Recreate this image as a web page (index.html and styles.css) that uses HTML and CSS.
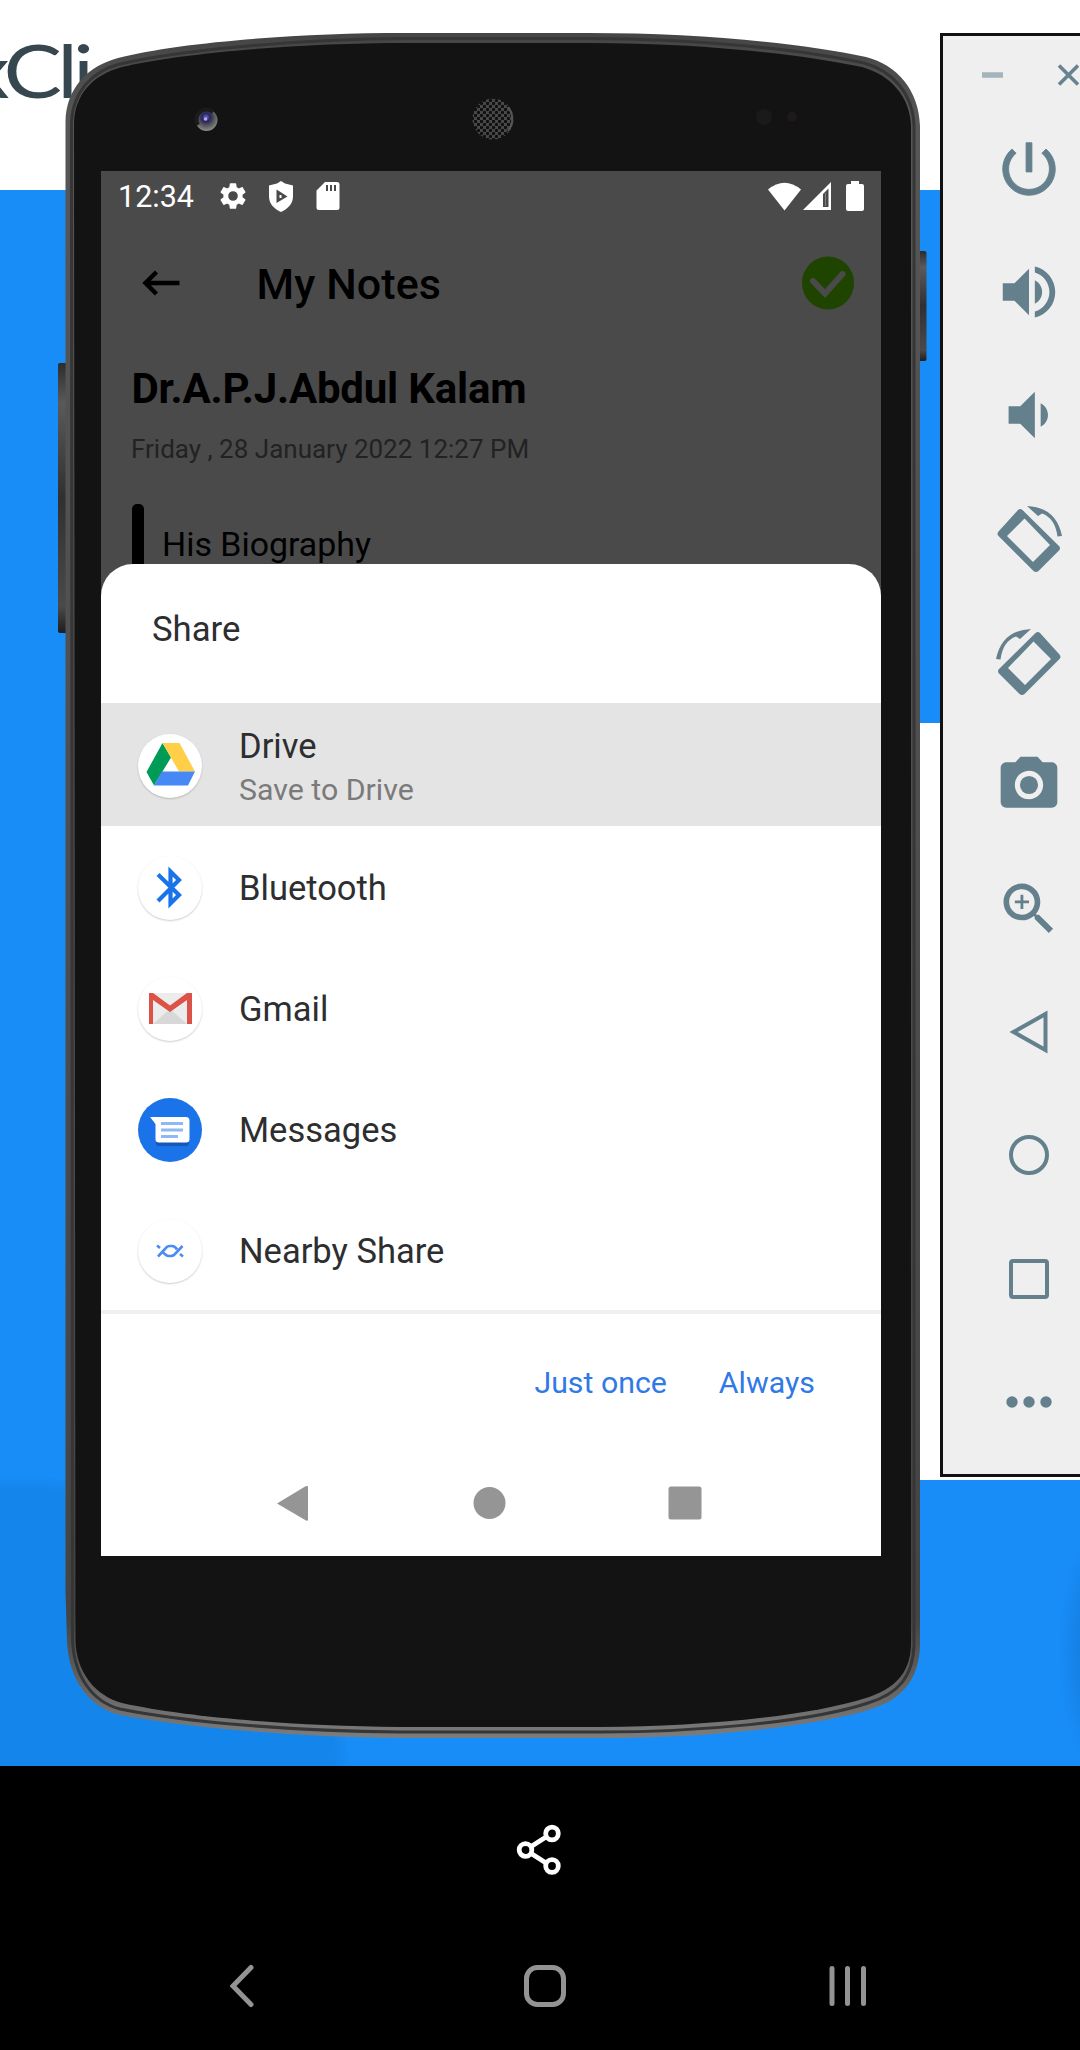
FILE: index.html
```html
<!DOCTYPE html>
<html lang="en">
<head>
<meta charset="utf-8">
<title>My Notes</title>
<link rel="stylesheet" href="styles.css">
</head>
<body>
<main class="stage">
  <div class="wordmark">xCli</div>

  <section class="phone">
    <svg class="phone-body" viewBox="58 33 870 1705" width="870" height="1705" aria-hidden="true">
      <defs>
        <linearGradient id="rim" x1="0" y1="0" x2="0" y2="1">
          <stop offset="0" stop-color="#454545"/>
          <stop offset=".05" stop-color="#565656"/>
          <stop offset=".93" stop-color="#444"/>
          <stop offset="1" stop-color="#7c7c7c"/>
        </linearGradient>
        <linearGradient id="key" x1="0" y1="0" x2="0" y2="1">
          <stop offset="0" stop-color="#2c2c2c"/>
          <stop offset=".15" stop-color="#5a5a5a"/>
          <stop offset=".5" stop-color="#303030"/>
          <stop offset=".9" stop-color="#4a4a4a"/>
          <stop offset="1" stop-color="#1d1d1d"/>
        </linearGradient>
        <radialGradient id="lens" cx=".48" cy=".38" r=".62">
          <stop offset="0" stop-color="#6d6cc4"/>
          <stop offset=".3" stop-color="#26245c"/>
          <stop offset=".6" stop-color="#55555a"/>
          <stop offset="1" stop-color="#8d8d8d"/>
        </radialGradient>
        <pattern id="mesh" width="6" height="6" patternUnits="userSpaceOnUse">
          <rect width="6" height="6" fill="#4a4a4a"/>
          <circle cx="1.5" cy="1.5" r="1.7" fill="#101010"/>
          <circle cx="4.5" cy="4.5" r="1.7" fill="#101010"/>
        </pattern>
      </defs>
      <rect x="58" y="363" width="12" height="270" rx="2" fill="url(#key)"/>
      <rect x="916" y="251" width="10.500" height="110" rx="2" fill="url(#key)"/>
      <path fill="url(#rim)" d="M65.500 122C66 88 88 66 118 58C180 42 300 33 404 33H589C700 33 800 43 866 57C897 65 919 90 920 126V1645C919 1680 902 1699 872 1709C810 1728 700 1738 600 1738H400C290 1737 185 1727 120 1715C90 1708 68 1680 67 1640L65.500 1592Z"/>
      <path fill="none" stroke="#363636" stroke-width="3" d="M71.500 122C73 92 92 71 120 64C180 50 300 39 404 38.500H589C700 39 800 49 864 63C893 71 913 94 914 126V1645C913 1677 898 1694 868 1703C810 1722 700 1732 600 1732H400C290 1731 185 1722 120 1709C93 1702 74 1677 72.500 1640Z"/>
      <path fill="#131313" d="M74 122C75 95 92 75 122 67C180 53 300 43 404 43H589C700 43 800 54 862 67C891 75 910 97 911 126V1645C910 1674 894 1689 866 1698C810 1716 700 1727 600 1727H400C290 1726 185 1717 122 1703C96 1696 76 1673 75.500 1640Z"/>
      <circle cx="206.500" cy="120" r="11" fill="url(#lens)"/>
      <path d="M198 125A10 10 0 0 1 200 112Q206 107 213 112" fill="none" stroke="#1b1b1b" stroke-width="4"/>
      <circle cx="205.500" cy="119" r="1.800" fill="#aaaaf0"/>
      <circle cx="493" cy="119" r="20.500" fill="url(#mesh)"/>
      <path d="M508 107A19 19 0 0 1 508 131" fill="none" stroke="#555" stroke-width="2"/>
      <circle cx="764" cy="117" r="8" fill="#1a1a1a"/>
      <circle cx="792" cy="117" r="5" fill="#1d1a19"/>
    </svg>

    <div class="screen">
      <div class="note">
        <div class="status">
          <span class="clock">12:34</span>
          <svg class="s-gear" width="32" height="32" viewBox="0 0 24 24" fill="#fff"><path d="M19.140 12.940c.04-.3.06-.61.06-.94 0-.32-.02-.64-.07-.94l2.030-1.580c.18-.14.23-.41.12-.61l-1.920-3.320c-.12-.22-.37-.29-.59-.22l-2.390.96c-.5-.38-1.030-.7-1.620-.94l-.36-2.540c-.04-.24-.24-.41-.48-.41h-3.840c-.24 0-.43.17-.47.41l-.36 2.540c-.59.24-1.130.57-1.620.94l-2.390-.96c-.22-.08-.47 0-.59.22L2.740 8.870c-.12.21-.08.47.12.61l2.030 1.580c-.05.3-.09.63-.09.94s.02.64.07.94l-2.030 1.580c-.18.14-.23.41-.12.61l1.920 3.320c.12.22.37.29.59.22l2.390-.96c.5.38 1.030.7 1.620.94l.36 2.540c.05.24.24.41.48.41h3.840c.24 0 .44-.17.47-.41l.36-2.540c.59-.24 1.130-.56 1.620-.94l2.390.96c.22.08.47 0 .59-.22l1.920-3.320c.12-.22.07-.47-.12-.61l-2.010-1.580zM12 15.600A3.600 3.600 0 1 1 12 8.400a3.600 3.600 0 0 1 0 7.200z"/></svg>
          <svg class="s-shield" width="26" height="31" viewBox="0 0 26 31"><path fill="#fff" d="M13 0l4 2.500 8 2v11c0 7-5 12.500-12 15.500C6 28 1 22.500 1 15.500v-11l8-2z"/><path fill="#4a4a4b" d="M8.500 8.500L19.500 15.500 8.500 22z"/><path fill="#fff" d="M11.500 14h2v3h-2z"/></svg>
          <svg class="s-sd" width="24" height="28" viewBox="0 0 24 28"><path fill="#fff" d="M9 0H21a2.500 2.500 0 0 1 2.500 2.500V25.500A2.500 2.500 0 0 1 21 28H3A2.500 2.500 0 0 1 .5 25.500V8.500z"/><path stroke="#4a4a4b" stroke-width="2" d="M11 3v6M15 3v6M19 3v6"/></svg>
          <span class="grow"></span>
          <svg width="33" height="29" viewBox="0 0 33 29"><path fill="#fff" d="M0 7.500Q16.500-6 33 7.500L16.500 28.500z"/></svg>
          <svg class="s-cell" width="28" height="28" viewBox="0 0 28 28"><path fill="#fff" d="M28 0V28H0z"/><path fill="#4a4a4b" d="M20 12l5.500-5.500V25H20z"/><path fill="#fff" d="M22 11h1v13h-1z" opacity=".3"/></svg>
          <svg class="s-batt" width="18" height="30" viewBox="0 0 18 30"><path fill="#fff" d="M5 0h8v3h3a2 2 0 0 1 2 2V28a2 2 0 0 1-2 2H2a2 2 0 0 1-2-2V5a2 2 0 0 1 2-2h3z"/></svg>
        </div>
        <div class="appbar">
          <svg width="38" height="26" viewBox="0 0 38 26" fill="none" stroke="#000" stroke-width="4.500"><path d="M37.500 13H3M14.500 2L3.500 13l11 11"/></svg>
          <h1>My Notes</h1>
          <svg width="52" height="54" viewBox="0 0 52 54"><ellipse cx="26" cy="27" rx="26" ry="26.500" fill="#1e4400"/><path d="M11 25l12 12.500L40.500 18" fill="none" stroke="#4a4a4b" stroke-width="6" stroke-linecap="round"/></svg>
        </div>
        <h2>Dr.A.P.J.Abdul Kalam</h2>
        <p class="date">Friday , 28 January 2022 12:27 PM</p>
        <div class="subtitle"><span class="mark"></span><span>His Biography</span></div>
      </div>

      <div class="sheet">
        <div class="sheet-title">Share</div>
        <ul class="targets">
          <li class="target selected">
            <svg class="app" viewBox="0 0 64 64"><path fill="#009b57" d="M24.500 9L33 23.500 16 51.500 8.500 38z"/><path fill="#ffcf48" d="M24.500 9h17L57 37.500H41z"/><path fill="#4688f4" d="M24 37.500h33L50 51.500H16z"/></svg>
            <div class="label two"><span>Drive</span><small>Save to Drive</small></div>
          </li>
          <li class="target">
            <svg class="app" viewBox="0 0 64 64" fill="none" stroke="#1a73e8" stroke-width="4.200"><path d="M20 18.500L41 39 32.500 47.500V15.500L41 24 20 45"/></svg>
            <span class="label">Bluetooth</span>
          </li>
          <li class="target">
            <svg class="app" viewBox="0 0 64 64"><path fill="#ececec" d="M11 16H54V47H11z"/><path fill="#d8d8d8" d="M15 47L32 32 49 47z"/><path fill="#dd5246" d="M11 16h4L32 28.500 49 16h5V47H49V23L32 35 15 23V47H11z"/></svg>
            <span class="label">Gmail</span>
          </li>
          <li class="target">
            <svg class="app blue" viewBox="0 0 64 64"><path fill="#1359b5" d="M14 23l4 2V45q0 3 3 3H48q3 0 3-3V30z"/><path fill="#fff" d="M12 19H48a3.500 3.500 0 0 1 3.500 3.500V41A3.500 3.500 0 0 1 48 44.500H21A3.500 3.500 0 0 1 17.500 41V26z"/><path stroke="#8fb8f4" stroke-width="3" d="M23 25.500H45M23 32H45M23 38.500H40"/></svg>
            <span class="label">Messages</span>
          </li>
          <li class="target">
            <svg class="app" viewBox="0 0 64 64" fill="none" stroke="#4c8af5" stroke-width="2.600"><path d="M20 37.500L28 29Q29 27 32 27H34Q37 27 39 30.500M25 33.500L28 36Q29 37 31 37H33Q35 37 36.500 35.500L44.500 27M19 26.500l3 2.500M42 35l3 2.500"/></svg>
            <span class="label">Nearby Share</span>
          </li>
        </ul>
        <div class="actions"><span>Just once</span><span>Always</span></div>
        <div class="softkeys">
          <svg width="34" height="35" viewBox="0 0 34 35" fill="#959595"><path d="M1 17.500L30 0q2-.5 2 1.500v32q0 2-2 1z"/></svg>
          <svg width="34" height="34" viewBox="0 0 34 34" fill="#959595"><circle cx="17.500" cy="17" r="16"/></svg>
          <svg width="34" height="34" viewBox="0 0 34 34" fill="#959595"><rect x=".5" y=".5" width="33" height="33" rx="2.500"/></svg>
        </div>
      </div>
    </div>
  </section>

  <aside class="toolbar">
    <div class="window-buttons">
      <svg width="21" height="22" viewBox="0 0 21 22"><path stroke="#a4b4bb" stroke-width="5.500" d="M0 11h21"/></svg>
      <svg width="22" height="22" viewBox="0 0 22 22"><path stroke="#67838f" stroke-width="3.600" d="M2 1.500l19 19M21 1.500l-19 19"/></svg>
    </div>
    <div class="tool"><svg width="70" height="70" viewBox="0 0 24 24" stroke="#64808d" stroke-width=".3"><path d="M13 3h-2v10h2V3zm4.830 2.170l-1.420 1.420C17.990 7.860 19 9.810 19 12c0 3.870-3.130 7-7 7s-7-3.130-7-7c0-2.190 1.010-4.140 2.580-5.420L6.170 5.170C4.230 6.820 3 9.260 3 12c0 4.970 4.030 9 9 9s9-4.030 9-9c0-2.740-1.230-5.180-3.170-6.830z"/></svg></div>
    <div class="tool"><svg width="70" height="70" viewBox="0 0 24 24"><path d="M3 9v6h4l5 5V4L7 9H3zm13.500 3c0-1.770-1.020-3.290-2.500-4.030v8.050c1.480-.73 2.500-2.250 2.500-4.020zM14 3.230v2.060c2.890.86 5 3.540 5 6.710s-2.110 5.850-5 6.710v2.060c4.010-.91 7-4.490 7-8.770s-2.990-7.860-7-8.770z"/></svg></div>
    <div class="tool"><svg width="70" height="70" viewBox="0 0 24 24"><path d="M18.500 12c0-1.770-1.020-3.290-2.500-4.030v8.050c1.480-.73 2.500-2.250 2.500-4.020zM5 9v6h4l5 5V4L9 9H5z"/></svg></div>
    <div class="tool"><svg width="70" height="70" viewBox="0 0 70 70"><path fill-rule="evenodd" d="M24 6q2-2 4.500 0L65 42q2 2 0 4.500L44.500 67q-2.500 2-5 0L4.500 32q-2-2 0-4.500zM30.500 14.500L13 32 39 58 56 41z"/><path d="M33 2Q62 3 68 32l-4.500.5Q61 14 48 9.500L44 12z"/></svg></div>
    <div class="tool"><svg width="70" height="70" viewBox="0 0 70 70"><g transform="matrix(-1 0 0 1 70 0)"><path fill-rule="evenodd" d="M24 6q2-2 4.500 0L65 42q2 2 0 4.500L44.500 67q-2.500 2-5 0L4.500 32q-2-2 0-4.500zM30.500 14.500L13 32 39 58 56 41z"/><path d="M33 2Q62 3 68 32l-4.500.5Q61 14 48 9.500L44 12z"/></g></svg></div>
    <div class="tool"><svg width="68" height="68" viewBox="0 0 24 24"><circle cx="12" cy="12" r="3.200"/><path d="M9 2L7.170 4H4c-1.100 0-2 .9-2 2v12c0 1.100.9 2 2 2h16c1.100 0 2-.9 2-2V6c0-1.100-.9-2-2-2h-3.170L15 2H9zm3 15c-2.760 0-5-2.240-5-5s2.240-5 5-5 5 2.240 5 5-2.240 5-5 5z"/></svg></div>
    <div class="tool"><svg width="68" height="68" viewBox="0 0 24 24"><path d="M15.500 14h-.79l-.28-.27C15.410 12.590 16 11.110 16 9.500 16 5.910 13.090 3 9.500 3S3 5.910 3 9.500 5.910 16 9.500 16c1.610 0 3.090-.59 4.230-1.570l.27.28v.79l5 4.990L20.490 19l-4.990-5zm-6 0C7.010 14 5 11.990 5 9.500S7.010 5 9.500 5 14 7.010 14 9.500 11.990 14 9.500 14zm2.500-4h-2v2H9v-2H7V9h2V7h1v2h2v1z"/></svg></div>
    <div class="tool line"><svg width="44" height="46" viewBox="0 0 44 46"><path d="M6.500 23L38.500 5V41z"/></svg></div>
    <div class="tool line"><svg width="44" height="44" viewBox="0 0 44 44"><circle cx="22" cy="22" r="18"/></svg></div>
    <div class="tool line"><svg width="44" height="44" viewBox="0 0 44 44"><rect x="4" y="4" width="36" height="36" rx="2"/></svg></div>
    <div class="tool"><svg width="50" height="14" viewBox="0 0 50 14"><circle cx="8" cy="7" r="5.700"/><circle cx="25" cy="7" r="5.700"/><circle cx="42" cy="7" r="5.700"/></svg></div>
  </aside>
</main>

<footer class="viewer">
  <div class="share">
    <svg width="48" height="54" viewBox="0 0 48 54" fill="none" stroke="#fff" stroke-width="4.800"><path d="M17 23L31 14M17 31L31 40"/><circle cx="37" cy="10.500" r="6.300"/><circle cx="10.500" cy="27" r="6.300"/><circle cx="37" cy="43" r="6.300"/></svg>
  </div>
  <nav class="system">
    <svg width="24" height="44" viewBox="0 0 24 44"><path d="M21 3.500L3 22l18 18.500"/></svg>
    <svg width="44" height="44" viewBox="0 0 44 44"><rect x="3.500" y="3.500" width="37" height="37" rx="11"/></svg>
    <svg width="40" height="44" viewBox="0 0 40 44"><path d="M4 4.500v35M19.500 4.500v35M35.500 4.500v35"/></svg>
  </nav>
</footer>
</body>
</html>
```
FILE: styles.css
```css
* { box-sizing: border-box; }

body {
  margin: 0;
  width: 1080px;
  height: 2050px;
  overflow: hidden;
  background: #000;
  font-family: Roboto, "Liberation Sans", sans-serif;
}

svg { display: block; flex: none; }

.stage {
  position: relative;
  display: flex;
  align-items: flex-start;
  height: 1766px;
  padding: 33px 0 0 58px;
  overflow: hidden;
  background:
    radial-gradient(ellipse 40px 120px at 1098px 1650px, #1276d4, #1276d400),
    radial-gradient(ellipse 330px 290px at 20px 1765px, #1485ea 95%, #1485ea00),
    linear-gradient(#fff 0 0) 900px 723px / 180px 757px no-repeat,
    linear-gradient(#fff 190px, #188df8 190px);
}

.wordmark {
  position: absolute;
  left: -34px;
  top: 25px;
  font: 400 73px/90px Lato, sans-serif;
  letter-spacing: -4px;
  transform: scaleX(1.2);
  transform-origin: 0 0;
  color: #36474f;
}

.phone {
  position: relative;
  flex: none;
  width: 870px;
  height: 1705px;
  padding: 138px 0 0 43px;
}

.phone-body { position: absolute; left: 0; top: 0; }

.screen {
  position: relative;
  width: 780px;
  height: 1385px;
  background: #4a4a4b;
  color: #000;
}

.note { height: 393px; overflow: hidden; }

.status { display: flex; align-items: center; height: 50px; padding: 0 17px; }
.clock { font-size: 30.500px; line-height: 36px; color: #fff; padding-top: 2px; }
.s-gear { margin-left: 23px; }
.s-shield { margin-left: 19px; }
.s-sd { margin-left: 22px; }
.grow { flex: 1; }
.s-cell { margin-left: 2px; }
.s-batt { margin-left: 15px; }

.appbar { display: flex; align-items: center; height: 124px; padding: 0 27px 0 41px; }
.appbar h1 { flex: 1; margin: 2px 0 0 76.500px; font-size: 43px; line-height: 50px; font-weight: 500; letter-spacing: .1px; }

.note h2 { margin: 19px 0 0 30.500px; font-size: 42px; line-height: 50px; font-weight: 700; letter-spacing: -.2px; white-space: nowrap; }
.date { margin: 18px 0 0 30px; font-size: 26px; line-height: 34px; color: #222; white-space: nowrap; }
.subtitle { display: flex; gap: 18px; margin: 37px 0 0 31px; font-size: 33.900px; line-height: 84px; }
.mark { width: 12px; height: 84px; margin-top: 1px; border-radius: 5px; background: #000; }

.sheet {
  height: 992px;
  background: #fff;
  border-radius: 32px 32px 0 0;
  color: #2d2e30;
}
.sheet-title { height: 139px; padding-left: 51px; font-size: 34.700px; line-height: 131px; }

.targets { margin: 0; padding: 0; list-style: none; border-bottom: 4px solid #f0f0f0; }
.target { display: flex; align-items: center; gap: 37px; height: 121px; padding: 2px 0 0 37px; font-size: 34.500px; }
.target.selected { height: 123px; background: #e4e4e4; }
.app { width: 64px; height: 64px; border-radius: 50%; background: #fff; box-shadow: 0 1px 2px #0003; }
.app.blue { background: #1a73e8; box-shadow: none; }
.label.two { display: flex; flex-direction: column; line-height: 44px; margin-top: 5px; }
.label small { font-size: 30.300px; color: #7a7a7a; }

.actions {
  display: flex;
  justify-content: flex-end;
  align-items: center;
  gap: 52px;
  height: 137px;
  padding-right: 66px;
  font-size: 30.300px;
  color: #3079e6;
}

.softkeys {
  display: flex;
  align-items: center;
  justify-content: space-between;
  height: 104px;
  padding: 0 179px 0 175px;
}

.toolbar {
  flex: none;
  width: 146px;
  height: 1444px;
  margin-left: 12px;
  border: 3px solid #111;
  background: #efefef;
  fill: #64808d;
}
.window-buttons { display: flex; justify-content: space-between; align-items: center; height: 71px; padding: 10px 4px 0 39px; }
.window-buttons svg { margin-bottom: 3px; }
.tool { display: grid; place-items: center; width: 172px; height: 123.350px; }
.tool.line { fill: none; stroke: #64808d; stroke-width: 4; }

.viewer { height: 284px; background: #000; }
.share { display: flex; align-items: center; justify-content: center; height: 168px; padding-right: 3px; }
.system {
  display: grid;
  grid-template-columns: repeat(3, 303px);
  place-items: center;
  height: 103px;
  padding-left: 90px;
  fill: none;
  stroke: #939393;
  stroke-width: 5;
  stroke-linecap: round;
}
```
